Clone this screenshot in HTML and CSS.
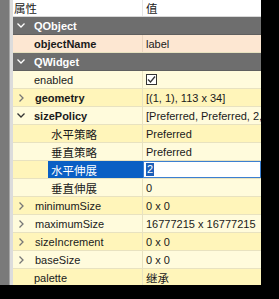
FILE: index.html
```html
<!DOCTYPE html>
<html lang="zh">
<head>
  <meta charset="UTF-8" />
  <title>属性编辑器</title>
  <link rel="stylesheet" href="styles.css">
</head>
<body>

  <div class="panel">
    <div class="strip"></div>

    <div class="tree">
      <div class="head">
        <div class="cell name cjk">属性</div>
        <div class="cell value cjk">值</div>
      </div>

      <div class="row group">
        <div class="cell name"><svg class="arrow" viewBox="0 0 8 5"><polyline points="0.5,0.5 4,4 7.5,0.5"/></svg>QObject</div>
        <div class="cell value"></div>
      </div>
      <div class="row peach">
        <div class="cell name"><span class="gap"></span><b>objectName</b></div>
        <div class="cell value">label</div>
      </div>

      <div class="row group">
        <div class="cell name"><svg class="arrow" viewBox="0 0 8 5"><polyline points="0.5,0.5 4,4 7.5,0.5"/></svg>QWidget</div>
        <div class="cell value"></div>
      </div>
      <div class="row light">
        <div class="cell name"><span class="gap"></span>enabled</div>
        <div class="cell value"><span class="check"><svg viewBox="0 0 11 11"><rect x="0.5" y="0.5" width="10" height="10"/><polyline points="2,5.5 4.5,8 9,2.5"/></svg></span></div>
      </div>
      <div class="row dark">
        <div class="cell name"><svg class="arrow side" viewBox="0 0 5 8"><polyline points="0.5,0.5 4,4 0.5,7.5"/></svg><b>geometry</b></div>
        <div class="cell value">[(1, 1), 113 x 34]</div>
      </div>
      <div class="row light">
        <div class="cell name"><svg class="arrow dim" viewBox="0 0 8 5"><polyline points="0.5,0.5 4,4 7.5,0.5"/></svg><b>sizePolicy</b></div>
        <div class="cell value">[Preferred, Preferred, 2, 0]</div>
      </div>
      <div class="row dark">
        <div class="cell name sub cjk">水平策略</div>
        <div class="cell value">Preferred</div>
      </div>
      <div class="row light">
        <div class="cell name sub cjk">垂直策略</div>
        <div class="cell value">Preferred</div>
      </div>
      <div class="row dark">
        <div class="cell name sub picked-row cjk"><span class="picked">水平伸展</span></div>
        <div class="cell value edit"><span class="input"><span class="sel">2</span></span></div>
      </div>
      <div class="row light">
        <div class="cell name sub cjk">垂直伸展</div>
        <div class="cell value">0</div>
      </div>
      <div class="row dark">
        <div class="cell name"><svg class="arrow side" viewBox="0 0 5 8"><polyline points="0.5,0.5 4,4 0.5,7.5"/></svg>minimumSize</div>
        <div class="cell value">0 x 0</div>
      </div>
      <div class="row light">
        <div class="cell name"><svg class="arrow side" viewBox="0 0 5 8"><polyline points="0.5,0.5 4,4 0.5,7.5"/></svg>maximumSize</div>
        <div class="cell value">16777215 x 16777215</div>
      </div>
      <div class="row dark">
        <div class="cell name"><svg class="arrow side" viewBox="0 0 5 8"><polyline points="0.5,0.5 4,4 0.5,7.5"/></svg>sizeIncrement</div>
        <div class="cell value">0 x 0</div>
      </div>
      <div class="row light">
        <div class="cell name"><svg class="arrow side" viewBox="0 0 5 8"><polyline points="0.5,0.5 4,4 0.5,7.5"/></svg>baseSize</div>
        <div class="cell value">0 x 0</div>
      </div>
      <div class="row dark">
        <div class="cell name"><span class="gap"></span>palette</div>
        <div class="cell value cjk">继承</div>
      </div>
    </div>
  </div>

</body>
</html>
```

FILE: styles.css
```css
/* Reset */
* {
  margin: 0; padding: 0; box-sizing: border-box;
}
html, body {
  height: 100%;
  background: #000;
  overflow: hidden;
}

/* Panel */
.panel {
  display: flex;
  width: 261px;
  height: 285px;
  overflow: hidden;
  font-family: "Liberation Sans", "Noto Sans CJK SC", sans-serif;
  font-size: 11px;
  color: #1a1a1a;
}
.cjk {
  font-family: "Noto Sans CJK SC", sans-serif;
  font-size: 11.5px;
}
.strip {
  width: 13px;
  flex: none;
  background: #7a7a7a;
  border-right: 3px solid #dcdcdc;
  box-shadow: inset -1px 0 0 #a5a5a5;
}
.tree {
  flex: 1;
  display: flex;
  flex-direction: column;
  min-width: 0;
}

/* Rows */
.head, .row {
  display: grid;
  grid-template-columns: 130px 1fr;
  flex: none;
}
.head {
  height: 17px;
  background: #fff;
  border-bottom: 1px solid #d9d9d9;
}
.head .name {
  padding-left: 1px;
  border-right: 1px solid #e6e6e6;
}
.row {
  height: 18px;
  border-bottom: 1px solid #e8e2c0;
}
.cell {
  display: flex;
  align-items: center;
  white-space: nowrap;
  overflow: hidden;
  line-height: 16px;
}
.value {
  padding-left: 3px;
}
.row .name {
  border-right: 1px solid #e8e2c0;
}

.group {
  background: #6e6e6e;
  border-bottom-color: #5f5f5f;
  color: #fff;
  font-weight: bold;
}
.group .name {
  border-right: none;
}
.peach { background: #fde7d2; }
.peach .name { border-right-color: #ecd6c0; }
.light { background: #fffbdc; }
.dark { background: #fff5ba; }

/* Arrows */
.arrow {
  width: 8px;
  height: 5px;
  margin: 0 9px 0 4px;
  flex: none;
  fill: none;
  stroke: #fff;
  stroke-width: 1.3;
}
.arrow.dim {
  stroke: #333;
}
.arrow.side {
  width: 5px;
  height: 8px;
  margin: 0 11px 0 6px;
  stroke: #777;
}
.gap {
  width: 21px;
  flex: none;
}

/* Sub properties */
.sub {
  padding-left: 38px;
}
.sub.picked-row {
  padding-left: 35px;
  border-right-color: #0a5fc4;
}
.picked {
  align-self: stretch;
  flex: 1;
  display: flex;
  align-items: center;
  padding-left: 3px;
  background: #0a5fc4;
  color: #fff;
}

/* Editor */
.edit {
  padding: 0;
}
.input {
  display: flex;
  align-items: center;
  width: 100%;
  height: 100%;
  background: #fff;
  border: 1px solid #3b7fd1;
  padding-left: 2px;
}
.sel {
  background: #1d5fb8;
  color: #fff;
  padding: 0 1px;
  line-height: 13px;
}

/* Checkbox */
.check svg {
  display: block;
  width: 11px;
  height: 11px;
  fill: #fff;
  stroke: #333;
  stroke-width: 1;
}
.check polyline {
  fill: none;
  stroke-width: 1.3;
}
```
